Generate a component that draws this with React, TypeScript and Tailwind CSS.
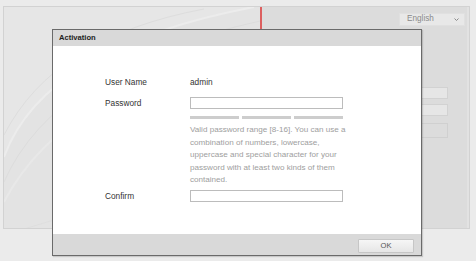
const Swoosh = () => (
  <svg className="absolute inset-0" width="256" height="222" viewBox="0 0 256 222" fill="none">
    <path d="M0 150 Q40 40 250 0 L256 0 L256 222 L0 222 Z" fill="#e3e3e3" />
    <path d="M0 150 Q40 40 250 0" stroke="#ececec" strokeWidth="2" />
    <path d="M0 128 Q50 30 200 2" stroke="#dddddd" strokeWidth="1" />
    <path d="M0 175 Q50 60 256 14" stroke="#dcdcdc" strokeWidth="1" />
    <path d="M0 195 Q60 80 256 40" stroke="#e8e8e8" strokeWidth="2" />
    <path d="M20 222 Q120 190 256 175" stroke="#dedede" strokeWidth="1" />
  </svg>
);

const Chevron = () => (
  <svg width="5" height="3" viewBox="0 0 5 3" fill="none">
    <path d="M0.5 0.5 L2.5 2.5 L4.5 0.5" stroke="#8a8a8a" strokeWidth="1" />
  </svg>
);

const Row = ({ label, children }: { label: string; children: React.ReactNode }) => (
  <div className="flex items-center">
    <span className="w-[85px] text-[8.3px] leading-[12px] text-[#333]">{label}</span>
    {children}
  </div>
);

const App = () => {
  return (
    <div className="relative w-[476px] h-[261px] bg-[#ebebeb] overflow-hidden font-['Liberation_Sans',Arial,sans-serif]">
      <div className="ml-[3px] mt-[6px] w-[467px] h-[223px] flex border border-[#d2d2d2]">
        <div className="relative w-[256px] h-full bg-[#e6e6e6] overflow-hidden">
          <Swoosh />
        </div>
        <div className="w-[2px] h-full bg-[#dc5f5f]" />
        <div className="flex-1 h-full bg-[#dcdcdc] flex flex-col items-end border-r-2 border-[#e2e2e2]">
          <div className="mt-[6px] mr-[2px] w-[66px] h-[13px] bg-[#e8e8e8] border border-[#e0e0e0] flex items-center justify-between pl-[7px] pr-[5px]">
            <span className="text-[8.2px] text-[#8a8a8a]">English</span>
            <Chevron />
          </div>
          <div className="mt-[61px] mr-[19px] w-[80px] h-[12px] bg-[#e6e6e6] border border-[#d2d2d2]" />
          <div className="mt-[5px] mr-[19px] w-[80px] h-[12px] bg-[#e6e6e6] border border-[#d2d2d2]" />
          <div className="mt-[7px] mr-[19px] w-[80px] h-[15px] bg-[#dcdcdc] border border-[#d0d0d0]" />
        </div>
      </div>

      <div className="absolute left-[52px] top-[29px] w-[370px] h-[227px] flex flex-col bg-white border border-[#6a6a6a] shadow-[1px_1px_1px_rgba(0,0,0,0.15)]">
        <div className="h-[16px] bg-[#d9d9d9] flex items-center pl-[6px]">
          <span className="text-[7.6px] font-bold text-[#1e1e1e]">Activation</span>
        </div>
        <div className="flex-1 flex flex-col pl-[52px] pt-[30px]">
          <Row label="User Name">
            <span className="text-[8.3px] leading-[12px] text-[#333]">admin</span>
          </Row>
          <div className="mt-[9px]">
            <Row label="Password">
              <div className="w-[153px] h-[12px] border border-[#bcbcbc] bg-white" />
            </Row>
          </div>
          <div className="ml-[85px] mt-[7px] w-[153px] flex gap-[3px]">
            <div className="flex-1 h-[3px] bg-[#cdcdcd]" />
            <div className="flex-1 h-[3px] bg-[#cdcdcd]" />
            <div className="flex-1 h-[3px] bg-[#cdcdcd]" />
          </div>
          <p className="ml-[85px] mt-[5px] text-[8.1px] leading-[12.5px] text-[#9e9e9e] whitespace-nowrap">
            Valid password range [8-16]. You can use a<br />
            combination of numbers, lowercase,<br />
            uppercase and special character for your<br />
            password with at least two kinds of them<br />
            contained.
          </p>
          <div className="mt-[3px]">
            <Row label="Confirm">
              <div className="w-[153px] h-[12px] border border-[#bcbcbc] bg-white" />
            </Row>
          </div>
        </div>
        <div className="h-[21px] bg-[#d9d9d9] flex justify-end items-start pt-[5px] pr-[7px]">
          <button className="w-[56px] h-[14px] bg-gradient-to-b from-[#f6f6f6] to-[#e6e6e6] border border-[#c6c6c6] rounded-[1px] flex items-center justify-center text-[7.6px] text-[#555]">
            OK
          </button>
        </div>
      </div>
    </div>
  );
};

export default App;
